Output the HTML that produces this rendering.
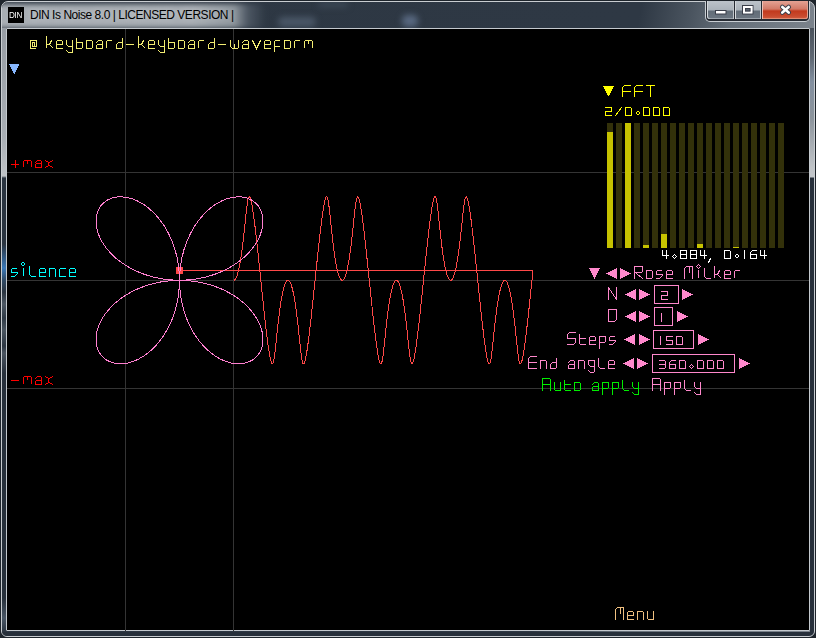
<!DOCTYPE html>
<html><head><meta charset="utf-8">
<style>
html,body{margin:0;padding:0;width:816px;height:638px;overflow:hidden;background:#1e252c;}
.win{position:absolute;left:0;top:0;width:816px;height:638px;}
.frame{position:absolute;left:1px;top:1px;width:812px;height:634px;border:1px solid #c9cdd1;border-radius:7px 7px 6px 6px;overflow:hidden;background:linear-gradient(100deg,#2d3743 0px,#2e3844 630px,#4a545f 680px,#66707a 720px,#7a828b 800px);}
.glow{position:absolute;left:-8px;top:2px;width:272px;height:24px;background:linear-gradient(90deg,#a8aeb4 0px,#a6acb2 200px,#8e969d 240px,#4c5662 254px,rgba(46,56,68,0) 272px);filter:blur(2.5px);border-radius:6px;}
.glow2{position:absolute;left:-10px;top:-2px;width:30px;height:200px;background:#9ea4aa;}
.lside{position:absolute;left:0px;top:26px;width:4px;height:604px;background:linear-gradient(180deg,#979da4 0px,#a9afb5 110px,#bfc3c7 148px,#2a3440 150px,#2a3440 216px,#3a78b8 240px,#2f4a66 252px,#2a3440 264px,#4d5864 276px,#2f3a46 290px,#4a5560 302px,#2c3642 318px,#4a5460 325px,#27303b 345px,#27303b 570px,#4a5766 590px,#2c3642 604px);}
.rside{position:absolute;left:808px;top:26px;width:4px;height:604px;background:linear-gradient(180deg,#4a525c 0px,#5f6873 30px,#8390a0 54px,#8c949c 90px,#c0c4c8 140px,#c4c8cc 149px,#27303b 150px,#27303b 604px);}
.bside{position:absolute;left:0px;top:630px;width:812px;height:4px;background:#27303b;}
.content{position:absolute;left:6px;top:28px;width:802px;height:601px;border:1px solid #c4c9ce;background:#000;border-radius:1px;}
#app{position:absolute;left:0;top:0;}
.blob{position:absolute;filter:blur(3px);border-radius:5px;}
.bo{position:absolute;left:705px;top:1px;width:105px;height:21px;background:#c9ced3;border-radius:0 0 5px 5px;}
.bd{position:absolute;left:706px;top:1px;width:103px;height:20px;background:#262b33;border-radius:0 0 4px 4px;}
.bt{position:absolute;top:1px;height:18px;}
.bg{background:linear-gradient(180deg,#bcc3ca 0px,#aab2ba 9px,#626d78 10px,#6d7782 19px);box-shadow:inset 1px 0 0 #d5d9dd, inset -1px 0 0 #c0c5ca, inset 0 -1px 0 #9aa2aa;}
.bmin{left:707px;width:27px;border-radius:0 0 0 3px;}
.bmax{left:735px;width:26px;}
.bcls{left:762px;width:46px;border-radius:0 0 3px 0;background:linear-gradient(180deg,#e4a294 0px,#d27a68 8px,#c23a1e 10px,#c84a2e 15px,#d6664a 19px);box-shadow:inset 1px 0 0 #efc0b4, inset -1px 0 0 #e0a090, inset 0 -1px 0 #e08a70;}

.icon{position:absolute;left:8px;top:7px;width:16px;height:16px;background:#000;}
.icon span{position:absolute;left:1px;top:3px;font:9px/10px "Liberation Sans",sans-serif;color:#fff;letter-spacing:-0.4px;transform:scaleX(0.9);transform-origin:0 0;}
.title{position:absolute;left:30px;top:7px;font:12px/16px "Liberation Sans",sans-serif;color:#000;white-space:nowrap;letter-spacing:-0.47px;
 text-shadow:0 0 6px rgba(255,255,255,0.5);}
</style></head><body>
<div class="win">
 <div class="frame"><div class="glow"></div><div class="blob" style="left:276px;top:15px;width:38px;height:10px;background:#4a5767;"></div><div class="blob" style="left:400px;top:13px;width:16px;height:12px;background:#586880;"></div><div class="blob" style="left:316px;top:0px;width:30px;height:5px;background:#3e4a58;"></div><div class="lside"></div><div class="rside"></div><div class="bside"></div></div>
 <div class="icon"><span>DIN</span></div>
 <div class="title">DIN Is Noise 8.0 | LICENSED VERSION |</div>
 <div class="bo"></div><div class="bd"></div>
 <div class="bt bg bmin"></div>
 <div class="bt bg bmax"></div>
 <div class="bt bcls"></div>
 <svg width="816" height="24" style="position:absolute;left:0;top:0">
  <rect x="715.5" y="10.5" width="10.5" height="3.5" fill="#fff" stroke="#3a3f4a" stroke-width="1"/>
  <rect x="742.5" y="5.5" width="10.5" height="8.5" fill="none" stroke="#3a3f4a" stroke-width="1"/>
  <rect x="744" y="7" width="7.5" height="5.5" fill="none" stroke="#fff" stroke-width="2"/>
  <rect x="745.5" y="8.5" width="4.5" height="2.5" fill="#5a6470" stroke="#3a3f4a" stroke-width="1"/>
  <path d="M782.3 7 L788.7 12.6 M788.7 7 L782.3 12.6" stroke="#3a3f4a" stroke-width="4.6" stroke-linecap="round"/>
  <path d="M782.3 7 L788.7 12.6 M788.7 7 L782.3 12.6" stroke="#fff" stroke-width="2.6" stroke-linecap="round"/>
 </svg>
 <div class="content"></div>
</div>
<svg id="app" width="816" height="638" viewBox="0 0 816 638"><g stroke="#343434" stroke-width="1" shape-rendering="crispEdges"><line x1="7" y1="172.5" x2="809" y2="172.5"/><line x1="7" y1="280.5" x2="809" y2="280.5"/><line x1="7" y1="388.5" x2="809" y2="388.5"/><line x1="125.5" y1="29" x2="125.5" y2="631"/><line x1="233.5" y1="29" x2="233.5" y2="631"/></g><path d="M233.72 280.30 L233.98 280.27 L234.23 280.19 L234.49 280.04 L234.75 279.84 L235.01 279.58 L235.26 279.27 L235.52 278.90 L235.77 278.47 L236.03 277.99 L236.28 277.45 L236.53 276.86 L236.79 276.21 L237.04 275.52 L237.28 274.78 L237.53 273.97 L237.78 273.13 L238.02 272.23 L238.27 271.29 L238.51 270.30 L238.75 269.27 L238.98 268.20 L239.22 267.08 L239.45 265.93 L239.68 264.73 L239.91 263.50 L240.14 262.24 L240.36 260.93 L240.58 259.60 L240.80 258.24 L241.02 256.85 L241.23 255.43 L241.44 253.99 L241.65 252.54 L241.86 251.05 L242.06 249.55 L242.26 248.03 L242.46 246.50 L242.65 244.95 L242.84 243.40 L243.03 241.84 L243.22 240.27 L243.40 238.70 L243.58 237.12 L243.75 235.56 L243.93 233.98 L244.10 232.42 L244.26 230.87 L244.43 229.32 L244.59 227.79 L244.75 226.27 L244.91 224.77 L245.06 223.29 L245.21 221.82 L245.36 220.38 L245.51 218.96 L245.65 217.57 L245.79 216.20 L245.93 214.88 L246.07 213.59 L246.21 212.32 L246.34 211.10 L246.48 209.90 L246.61 208.76 L246.74 207.65 L246.87 206.60 L247.00 205.59 L247.13 204.62 L247.26 203.70 L247.39 202.84 L247.52 202.02 L247.65 201.27 L247.78 200.56 L247.91 199.91 L248.04 199.32 L248.17 198.79 L248.31 198.32 L248.44 197.91 L248.58 197.56 L248.72 197.27 L248.86 197.05 L249.00 196.89 L249.15 196.80 L249.30 196.78 L249.45 196.82 L249.60 196.93 L249.76 197.10 L249.92 197.35 L250.08 197.66 L250.24 198.04 L250.41 198.49 L250.58 199.01 L250.75 199.59 L250.93 200.25 L251.10 200.97 L251.29 201.76 L251.47 202.62 L251.66 203.54 L251.85 204.53 L252.04 205.59 L252.24 206.71 L252.44 207.90 L252.64 209.15 L252.84 210.46 L253.05 211.84 L253.26 213.28 L253.47 214.77 L253.69 216.33 L253.91 217.94 L254.13 219.62 L254.35 221.33 L254.58 223.10 L254.81 224.94 L255.04 226.81 L255.27 228.75 L255.50 230.72 L255.74 232.73 L255.98 234.80 L256.22 236.90 L256.46 239.06 L256.70 241.23 L256.95 243.46 L257.20 245.70 L257.44 247.98 L257.70 250.31 L257.95 252.64 L258.20 255.02 L258.45 257.40 L258.71 259.82 L258.96 262.25 L259.22 264.69 L259.47 267.16 L259.73 269.63 L259.99 272.12 L260.24 274.61 L260.50 277.12 L260.76 279.61 L261.02 282.10 L261.28 284.61 L261.53 287.10 L261.79 289.60 L262.05 292.07 L262.30 294.54 L262.56 297.00 L262.82 299.44 L263.07 301.87 L263.33 304.26 L263.58 306.66 L263.83 309.00 L264.08 311.33 L264.33 313.64 L264.58 315.90 L264.82 318.15 L265.07 320.34 L265.31 322.52 L265.55 324.64 L265.79 326.72 L266.03 328.77 L266.27 330.77 L266.50 332.73 L266.73 334.63 L266.96 336.48 L267.19 338.29 L267.41 340.04 L267.63 341.75 L267.85 343.38 L268.07 344.98 L268.29 346.50 L268.50 347.97 L268.71 349.38 L268.91 350.73 L269.12 352.02 L269.32 353.24 L269.52 354.40 L269.71 355.49 L269.90 356.52 L270.09 357.48 L270.28 358.37 L270.46 359.21 L270.64 359.96 L270.82 360.66 L270.99 361.28 L271.16 361.83 L271.33 362.32 L271.50 362.74 L271.66 363.09 L271.82 363.37 L271.98 363.58 L272.13 363.73 L272.28 363.81 L272.43 363.82 L272.58 363.76 L272.72 363.64 L272.87 363.46 L273.01 363.21 L273.15 362.89 L273.28 362.52 L273.42 362.08 L273.55 361.58 L273.68 361.02 L273.82 360.41 L273.95 359.73 L274.08 359.00 L274.21 358.22 L274.34 357.38 L274.46 356.49 L274.59 355.56 L274.72 354.57 L274.85 353.54 L274.98 352.45 L275.11 351.33 L275.25 350.16 L275.38 348.96 L275.52 347.73 L275.65 346.44 L275.79 345.13 L275.93 343.78 L276.08 342.41 L276.22 341.01 L276.37 339.58 L276.52 338.13 L276.67 336.65 L276.83 335.17 L276.98 333.65 L277.14 332.13 L277.31 330.58 L277.47 329.04 L277.64 327.48 L277.81 325.91 L277.99 324.34 L278.17 322.77 L278.35 321.20 L278.53 319.63 L278.72 318.06 L278.91 316.51 L279.10 314.95 L279.29 313.42 L279.49 311.89 L279.69 310.38 L279.90 308.89 L280.11 307.41 L280.31 305.96 L280.53 304.53 L280.74 303.13 L280.96 301.74 L281.18 300.40 L281.40 299.08 L281.63 297.79 L281.86 296.55 L282.09 295.33 L282.32 294.15 L282.55 293.02 L282.79 291.91 L283.02 290.86 L283.27 289.85 L283.51 288.88 L283.75 287.96 L284.00 287.09 L284.24 286.26 L284.49 285.49 L284.74 284.76 L284.99 284.09 L285.24 283.47 L285.50 282.90 L285.75 282.39 L286.00 281.93 L286.26 281.53 L286.51 281.19 L286.77 280.89 L287.03 280.66 L287.29 280.49 L287.54 280.37 L287.80 280.31 L288.06 280.31 L288.32 280.36 L288.58 280.47 L288.83 280.64 L289.09 280.87 L289.35 281.15 L289.60 281.49 L289.86 281.89 L290.11 282.34 L290.37 282.85 L290.62 283.41 L290.87 284.02 L291.12 284.69 L291.37 285.41 L291.62 286.18 L291.87 287.00 L292.11 287.87 L292.36 288.79 L292.60 289.75 L292.84 290.76 L293.08 291.81 L293.31 292.91 L293.55 294.04 L293.78 295.21 L294.01 296.42 L294.24 297.67 L294.46 298.96 L294.69 300.27 L294.91 301.62 L295.12 302.99 L295.34 304.39 L295.55 305.82 L295.76 307.27 L295.97 308.74 L296.17 310.23 L296.38 311.75 L296.57 313.27 L296.77 314.80 L296.96 316.35 L297.15 317.91 L297.34 319.48 L297.52 321.04 L297.70 322.62 L297.88 324.19 L298.06 325.75 L298.23 327.33 L298.40 328.88 L298.56 330.44 L298.73 331.97 L298.89 333.50 L299.05 335.02 L299.20 336.51 L299.35 337.99 L299.50 339.44 L299.65 340.88 L299.80 342.28 L299.94 343.65 L300.08 345.00 L300.22 346.31 L300.36 347.60 L300.49 348.84 L300.63 350.05 L300.76 351.22 L300.89 352.34 L301.02 353.43 L301.15 354.47 L301.28 355.46 L301.41 356.40 L301.54 357.29 L301.67 358.14 L301.80 358.93 L301.93 359.66 L302.06 360.34 L302.19 360.97 L302.32 361.53 L302.46 362.03 L302.59 362.48 L302.73 362.86 L302.87 363.18 L303.01 363.44 L303.15 363.63 L303.29 363.76 L303.44 363.82 L303.59 363.81 L303.74 363.74 L303.90 363.60 L304.05 363.39 L304.21 363.12 L304.38 362.78 L304.54 362.37 L304.71 361.88 L304.88 361.34 L305.05 360.72 L305.23 360.03 L305.41 359.28 L305.59 358.46 L305.78 357.57 L305.97 356.61 L306.16 355.60 L306.35 354.50 L306.55 353.36 L306.75 352.14 L306.96 350.86 L307.16 349.52 L307.37 348.11 L307.58 346.65 L307.80 345.12 L308.01 343.55 L308.23 341.91 L308.45 340.21 L308.68 338.47 L308.91 336.66 L309.13 334.82 L309.37 332.91 L309.60 330.96 L309.83 328.97 L310.07 326.93 L310.31 324.85 L310.55 322.72 L310.80 320.56 L311.04 318.37 L311.29 316.13 L311.53 313.87 L311.78 311.56 L312.03 309.24 L312.29 306.87 L312.54 304.50 L312.79 302.11 L313.05 299.68 L313.30 297.25 L313.56 294.78 L313.81 292.32 L314.07 289.83 L314.33 287.35 L314.59 284.86 L314.84 282.35 L315.10 279.86 L315.36 277.35 L315.62 274.86 L315.87 272.37 L316.13 269.88 L316.39 267.41 L316.65 264.93 L316.90 262.49 L317.16 260.05 L317.41 257.64 L317.66 255.26 L317.92 252.88 L318.17 250.54 L318.42 248.21 L318.67 245.93 L318.91 243.66 L319.16 241.45 L319.40 239.27 L319.65 237.11 L319.89 235.01 L320.13 232.93 L320.36 230.92 L320.60 228.93 L320.83 227.00 L321.06 225.13 L321.29 223.28 L321.51 221.51 L321.74 219.77 L321.96 218.10 L322.18 216.49 L322.39 214.92 L322.61 213.42 L322.82 211.98 L323.02 210.60 L323.23 209.27 L323.43 208.02 L323.63 206.83 L323.83 205.70 L324.02 204.64 L324.21 203.63 L324.40 202.70 L324.59 201.84 L324.77 201.04 L324.94 200.32 L325.12 199.65 L325.29 199.06 L325.46 198.53 L325.63 198.08 L325.79 197.69 L325.96 197.37 L326.11 197.12 L326.27 196.94 L326.42 196.83 L326.58 196.78 L326.72 196.80 L326.87 196.88 L327.01 197.03 L327.15 197.25 L327.29 197.53 L327.43 197.87 L327.57 198.28 L327.70 198.74 L327.84 199.26 L327.97 199.85 L328.10 200.49 L328.23 201.19 L328.36 201.95 L328.49 202.76 L328.62 203.62 L328.75 204.53 L328.88 205.49 L329.01 206.50 L329.14 207.56 L329.27 208.65 L329.40 209.79 L329.53 210.98 L329.67 212.19 L329.80 213.46 L329.94 214.75 L330.08 216.08 L330.22 217.43 L330.37 218.82 L330.51 220.24 L330.66 221.67 L330.81 223.14 L330.97 224.62 L331.12 226.13 L331.28 227.64 L331.44 229.17 L331.61 230.72 L331.77 232.27 L331.94 233.84 L332.12 235.40 L332.29 236.97 L332.47 238.55 L332.65 240.11 L332.84 241.69 L333.03 243.24 L333.22 244.80 L333.41 246.34 L333.61 247.87 L333.81 249.40 L334.01 250.90 L334.22 252.39 L334.42 253.85 L334.64 255.30 L334.85 256.71 L335.06 258.10 L335.28 259.47 L335.50 260.80 L335.73 262.11 L335.95 263.38 L336.18 264.62 L336.41 265.81 L336.65 266.97 L336.88 268.09 L337.12 269.17 L337.36 270.21 L337.60 271.20 L337.84 272.14 L338.09 273.04 L338.33 273.89 L338.58 274.70 L338.83 275.45 L339.08 276.15 L339.33 276.80 L339.58 277.39 L339.83 277.94 L340.09 278.42 L340.34 278.86 L340.60 279.23 L340.86 279.55 L341.11 279.82 L341.37 280.02 L341.63 280.17 L341.89 280.27 L342.14 280.30 L342.40 280.28 L342.66 280.20 L342.92 280.06 L343.17 279.86 L343.43 279.61 L343.69 279.30 L343.95 278.93 L344.20 278.51 L344.45 278.04 L344.71 277.50 L344.96 276.92 L345.21 276.28 L345.46 275.59 L345.71 274.84 L345.96 274.05 L346.20 273.21 L346.45 272.32 L346.69 271.38 L346.93 270.39 L347.17 269.37 L347.41 268.29 L347.64 267.19 L347.88 266.04 L348.11 264.84 L348.34 263.62 L348.57 262.35 L348.79 261.05 L349.01 259.73 L349.23 258.36 L349.45 256.98 L349.66 255.56 L349.87 254.13 L350.08 252.66 L350.29 251.18 L350.49 249.69 L350.69 248.17 L350.89 246.64 L351.08 245.09 L351.27 243.54 L351.46 241.97 L351.65 240.41 L351.83 238.85 L352.01 237.27 L352.19 235.70 L352.36 234.13 L352.53 232.57 L352.70 231.02 L352.86 229.46 L353.02 227.93 L353.18 226.41 L353.34 224.91 L353.50 223.41 L353.65 221.95 L353.79 220.51 L353.94 219.09 L354.09 217.70 L354.23 216.33 L354.37 215.00 L354.51 213.69 L354.64 212.43 L354.78 211.21 L354.91 210.01 L355.04 208.87 L355.18 207.75 L355.31 206.69 L355.44 205.67 L355.57 204.71 L355.69 203.79 L355.82 202.91 L355.95 202.10 L356.08 201.33 L356.21 200.62 L356.34 199.97 L356.47 199.37 L356.61 198.84 L356.74 198.36 L356.88 197.94 L357.02 197.59 L357.15 197.30 L357.30 197.07 L357.44 196.91 L357.58 196.81 L357.73 196.78 L357.88 196.81 L358.04 196.91 L358.19 197.08 L358.35 197.32 L358.51 197.63 L358.67 198.00 L358.84 198.45 L359.01 198.96 L359.18 199.53 L359.36 200.18 L359.53 200.90 L359.72 201.69 L359.90 202.53 L360.09 203.46 L360.28 204.44 L360.47 205.49 L360.67 206.61 L360.87 207.79 L361.07 209.04 L361.27 210.34 L361.48 211.72 L361.69 213.14 L361.90 214.63 L362.12 216.19 L362.34 217.79 L362.56 219.46 L362.78 221.17 L363.01 222.95 L363.23 224.77 L363.46 226.64 L363.70 228.57 L363.93 230.53 L364.17 232.56 L364.40 234.61 L364.64 236.71 L364.89 238.86 L365.13 241.03 L365.38 243.25 L365.62 245.50 L365.87 247.79 L366.12 250.09 L366.37 252.42 L366.62 254.80 L366.88 257.18 L367.13 259.60 L367.39 262.02 L367.64 264.48 L367.90 266.93 L368.15 269.40 L368.41 271.90 L368.67 274.38 L368.93 276.89 L369.19 279.38 L369.44 281.87 L369.70 284.38 L369.96 286.87 L370.22 289.37 L370.47 291.85 L370.73 294.33 L370.99 296.78 L371.24 299.21 L371.50 301.65 L371.75 304.04 L372.00 306.44 L372.25 308.79 L372.51 311.13 L372.75 313.43 L373.00 315.69 L373.25 317.94 L373.49 320.14 L373.74 322.32 L373.98 324.45 L374.22 326.55 L374.46 328.59 L374.69 330.58 L374.93 332.55 L375.16 334.46 L375.39 336.32 L375.61 338.13 L375.84 339.88 L376.06 341.59 L376.28 343.24 L376.50 344.84 L376.71 346.36 L376.93 347.85 L377.14 349.26 L377.34 350.61 L377.55 351.90 L377.75 353.13 L377.95 354.30 L378.14 355.39 L378.33 356.43 L378.52 357.40 L378.71 358.29 L378.89 359.13 L379.07 359.90 L379.25 360.60 L379.42 361.22 L379.59 361.78 L379.76 362.28 L379.93 362.70 L380.09 363.06 L380.25 363.35 L380.41 363.57 L380.57 363.72 L380.72 363.80 L380.87 363.82 L381.01 363.77 L381.16 363.66 L381.30 363.48 L381.44 363.23 L381.58 362.93 L381.72 362.56 L381.85 362.12 L381.99 361.63 L382.12 361.07 L382.25 360.47 L382.38 359.79 L382.51 359.07 L382.64 358.29 L382.77 357.46 L382.90 356.58 L383.03 355.64 L383.16 354.66 L383.29 353.63 L383.42 352.55 L383.55 351.44 L383.68 350.27 L383.82 349.08 L383.95 347.83 L384.09 346.56 L384.23 345.26 L384.37 343.91 L384.51 342.54 L384.66 341.14 L384.80 339.71 L384.95 338.26 L385.11 336.79 L385.26 335.30 L385.42 333.79 L385.58 332.27 L385.74 330.72 L385.91 329.18 L386.08 327.61 L386.25 326.05 L386.42 324.49 L386.60 322.91 L386.78 321.34 L386.96 319.77 L387.15 318.21 L387.34 316.65 L387.53 315.09 L387.72 313.56 L387.92 312.03 L388.12 310.52 L388.33 309.02 L388.53 307.55 L388.74 306.10 L388.96 304.66 L389.17 303.25 L389.39 301.87 L389.61 300.52 L389.83 299.19 L390.06 297.91 L390.28 296.66 L390.51 295.44 L390.74 294.26 L390.98 293.11 L391.21 292.01 L391.45 290.96 L391.69 289.94 L391.93 288.97 L392.18 288.04 L392.42 287.16 L392.67 286.33 L392.92 285.55 L393.16 284.83 L393.42 284.15 L393.67 283.52 L393.92 282.95 L394.17 282.44 L394.43 281.97 L394.68 281.56 L394.94 281.21 L395.20 280.92 L395.45 280.68 L395.71 280.50 L395.97 280.38 L396.23 280.31 L396.49 280.30 L396.74 280.35 L397.00 280.46 L397.26 280.62 L397.52 280.85 L397.77 281.13 L398.03 281.46 L398.28 281.85 L398.54 282.30 L398.79 282.80 L399.05 283.36 L399.30 283.97 L399.55 284.63 L399.80 285.34 L400.05 286.11 L400.29 286.92 L400.54 287.79 L400.78 288.70 L401.03 289.66 L401.27 290.67 L401.50 291.71 L401.74 292.80 L401.97 293.93 L402.21 295.11 L402.44 296.31 L402.66 297.55 L402.89 298.84 L403.11 300.14 L403.33 301.49 L403.55 302.86 L403.77 304.27 L403.98 305.69 L404.19 307.13 L404.40 308.61 L404.60 310.09 L404.80 311.61 L405.00 313.13 L405.20 314.67 L405.39 316.21 L405.58 317.76 L405.77 319.33 L405.95 320.90 L406.14 322.48 L406.31 324.04 L406.49 325.62 L406.66 327.18 L406.83 328.74 L407.00 330.30 L407.16 331.83 L407.32 333.37 L407.48 334.88 L407.63 336.37 L407.79 337.85 L407.94 339.31 L408.09 340.74 L408.23 342.15 L408.38 343.53 L408.52 344.88 L408.66 346.19 L408.79 347.48 L408.93 348.73 L409.06 349.94 L409.20 351.11 L409.33 352.25 L409.46 353.33 L409.59 354.37 L409.72 355.37 L409.85 356.32 L409.98 357.22 L410.11 358.06 L410.23 358.86 L410.37 359.60 L410.50 360.28 L410.63 360.91 L410.76 361.48 L410.89 361.99 L411.03 362.44 L411.16 362.83 L411.30 363.15 L411.44 363.42 L411.59 363.61 L411.73 363.75 L411.88 363.81 L412.02 363.82 L412.18 363.75 L412.33 363.62 L412.49 363.42 L412.65 363.15 L412.81 362.81 L412.97 362.40 L413.14 361.93 L413.31 361.39 L413.49 360.78 L413.66 360.10 L413.84 359.35 L414.02 358.54 L414.21 357.66 L414.40 356.71 L414.59 355.69 L414.78 354.61 L414.98 353.46 L415.18 352.25 L415.38 350.98 L415.59 349.65 L415.80 348.24 L416.01 346.79 L416.22 345.26 L416.44 343.69 L416.66 342.05 L416.88 340.37 L417.11 338.63 L417.33 336.83 L417.56 334.99 L417.79 333.08 L418.03 331.14 L418.26 329.16 L418.50 327.12 L418.74 325.04 L418.98 322.91 L419.22 320.76 L419.47 318.56 L419.71 316.33 L419.96 314.08 L420.21 311.77 L420.46 309.45 L420.71 307.09 L420.96 304.72 L421.22 302.31 L421.47 299.90 L421.73 297.47 L421.98 295.01 L422.24 292.55 L422.50 290.06 L422.75 287.58 L423.01 285.07 L423.27 282.58 L423.53 280.09 L423.78 277.58 L424.04 275.09 L424.30 272.58 L424.56 270.10 L424.81 267.63 L425.07 265.16 L425.33 262.72 L425.58 260.27 L425.84 257.86 L426.09 255.46 L426.34 253.09 L426.59 250.75 L426.84 248.42 L427.09 246.14 L427.34 243.87 L427.58 241.65 L427.83 239.45 L428.07 237.31 L428.31 235.20 L428.55 233.12 L428.79 231.10 L429.02 229.11 L429.26 227.18 L429.49 225.30 L429.72 223.45 L429.94 221.67 L430.17 219.93 L430.39 218.25 L430.61 216.62 L430.82 215.06 L431.03 213.56 L431.25 212.11 L431.45 210.72 L431.66 209.39 L431.86 208.13 L432.06 206.93 L432.26 205.80 L432.45 204.73 L432.64 203.72 L432.83 202.79 L433.02 201.91 L433.20 201.11 L433.38 200.37 L433.55 199.71 L433.73 199.11 L433.90 198.58 L434.06 198.12 L434.23 197.72 L434.39 197.40 L434.55 197.14 L434.71 196.95 L434.86 196.83 L435.01 196.78 L435.16 196.79 L435.30 196.87 L435.45 197.02 L435.59 197.22 L435.73 197.50 L435.87 197.83 L436.00 198.24 L436.14 198.69 L436.27 199.22 L436.40 199.79 L436.53 200.43 L436.67 201.13 L436.80 201.87 L436.92 202.68 L437.05 203.53 L437.18 204.44 L437.31 205.40 L437.44 206.40 L437.57 207.46 L437.70 208.55 L437.84 209.69 L437.97 210.87 L438.10 212.08 L438.24 213.34 L438.38 214.63 L438.52 215.96 L438.66 217.31 L438.80 218.70 L438.95 220.11 L439.10 221.54 L439.25 223.01 L439.40 224.48 L439.56 225.99 L439.71 227.50 L439.88 229.04 L440.04 230.58 L440.21 232.13 L440.38 233.69 L440.55 235.26 L440.73 236.83 L440.90 238.40 L441.09 239.97 L441.27 241.54 L441.46 243.10 L441.65 244.66 L441.84 246.20 L442.04 247.74 L442.24 249.26 L442.44 250.76 L442.65 252.25 L442.85 253.72 L443.06 255.17 L443.28 256.58 L443.49 257.98 L443.71 259.35 L443.93 260.68 L444.16 261.99 L444.38 263.26 L444.61 264.50 L444.84 265.70 L445.07 266.86 L445.31 267.99 L445.54 269.07 L445.78 270.12 L446.02 271.11 L446.27 272.06 L446.51 272.96 L446.76 273.82 L447.00 274.63 L447.25 275.38 L447.50 276.09 L447.75 276.74 L448.01 277.34 L448.26 277.89 L448.51 278.38 L448.77 278.82 L449.02 279.20 L449.28 279.53 L449.54 279.80 L449.80 280.01 L450.05 280.16 L450.31 280.26 L450.57 280.30 L450.83 280.28 L451.08 280.20 L451.34 280.07 L451.60 279.88 L451.86 279.63 L452.11 279.33 L452.37 278.97 L452.62 278.55 L452.88 278.08 L453.13 277.55 L453.38 276.97 L453.64 276.34 L453.89 275.65 L454.14 274.91 L454.38 274.13 L454.63 273.28 L454.87 272.40 L455.12 271.47 L455.36 270.49 L455.60 269.47 L455.84 268.39 L456.07 267.29 L456.30 266.14 L456.54 264.95 L456.76 263.73 L456.99 262.46 L457.22 261.17 L457.44 259.84 L457.66 258.49 L457.87 257.11 L458.09 255.69 L458.30 254.26 L458.51 252.80 L458.72 251.32 L458.92 249.82 L459.12 248.31 L459.32 246.78 L459.51 245.23 L459.70 243.69 L459.89 242.12 L460.08 240.56 L460.26 238.98 L460.44 237.41 L460.62 235.85 L460.79 234.27 L460.96 232.71 L461.13 231.15 L461.30 229.60 L461.46 228.07 L461.62 226.54 L461.77 225.04 L461.93 223.55 L462.08 222.08 L462.23 220.63 L462.38 219.22 L462.52 217.82 L462.66 216.45 L462.80 215.12 L462.94 213.81 L463.08 212.55 L463.21 211.31 L463.35 210.12 L463.48 208.97 L463.61 207.85 L463.74 206.79 L463.87 205.76 L464.00 204.79 L464.13 203.86 L464.26 202.99 L464.39 202.17 L464.52 201.40 L464.65 200.68 L464.78 200.02 L464.91 199.42 L465.04 198.88 L465.18 198.40 L465.31 197.98 L465.45 197.62 L465.59 197.32 L465.73 197.09 L465.87 196.92 L466.02 196.81 L466.17 196.78 L466.32 196.81 L466.47 196.90 L466.62 197.07 L466.78 197.30 L466.94 197.60 L467.11 197.96 L467.27 198.40 L467.44 198.91 L467.61 199.48 L467.79 200.12 L467.97 200.83 L468.15 201.61 L468.33 202.45 L468.52 203.37 L468.71 204.35 L468.90 205.40 L469.10 206.50 L469.30 207.67 L469.50 208.92 L469.70 210.22 L469.91 211.59 L470.12 213.01 L470.33 214.50 L470.55 216.04 L470.76 217.64 L470.98 219.30 L471.21 221.01 L471.43 222.79 L471.66 224.60 L471.89 226.48 L472.12 228.39 L472.36 230.35 L472.59 232.37 L472.83 234.42 L473.07 236.53 L473.31 238.66 L473.56 240.83 L473.80 243.05 L474.05 245.29 L474.30 247.58 L474.55 249.88 L474.80 252.23 L475.05 254.58 L475.30 256.96 L475.56 259.38 L475.81 261.80 L476.07 264.26 L476.32 266.71 L476.58 269.19 L476.84 271.67 L477.09 274.15 L477.35 276.66 L477.61 279.15 L477.87 281.66 L478.13 284.15 L478.38 286.64 L478.64 289.14 L478.90 291.62 L479.16 294.10 L479.41 296.55 L479.67 299.01 L479.92 301.42 L480.17 303.82 L480.43 306.22 L480.68 308.57 L480.93 310.92 L481.18 313.22 L481.43 315.50 L481.67 317.74 L481.92 319.94 L482.16 322.12 L482.40 324.25 L482.65 326.36 L482.88 328.40 L483.12 330.42 L483.35 332.37 L483.58 334.28 L483.82 336.16 L484.04 337.96 L484.27 339.73 L484.49 341.44 L484.71 343.09 L484.93 344.69 L485.14 346.23 L485.36 347.71 L485.56 349.13 L485.77 350.49 L485.98 351.79 L486.18 353.02 L486.38 354.19 L486.57 355.30 L486.76 356.34 L486.95 357.31 L487.14 358.22 L487.32 359.06 L487.50 359.83 L487.68 360.54 L487.86 361.17 L488.03 361.74 L488.20 362.24 L488.36 362.67 L488.53 363.03 L488.69 363.32 L488.84 363.55 L489.00 363.71 L489.15 363.80 L489.30 363.82 L489.45 363.78 L489.59 363.67 L489.74 363.50 L489.88 363.26 L490.02 362.96 L490.15 362.59 L490.29 362.16 L490.42 361.68 L490.56 361.13 L490.69 360.52 L490.82 359.86 L490.95 359.14 L491.08 358.36 L491.21 357.54 L491.34 356.66 L491.47 355.73 L491.59 354.75 L491.73 353.72 L491.86 352.65 L491.99 351.54 L492.12 350.38 L492.25 349.19 L492.39 347.95 L492.53 346.68 L492.66 345.37 L492.80 344.03 L492.95 342.67 L493.09 341.27 L493.24 339.85 L493.39 338.39 L493.54 336.93 L493.69 335.43 L493.85 333.93 L494.01 332.41 L494.17 330.86 L494.34 329.32 L494.51 327.76 L494.68 326.20 L494.85 324.63 L495.03 323.05 L495.21 321.49 L495.39 319.91 L495.58 318.35 L495.77 316.78 L495.96 315.24 L496.15 313.70 L496.35 312.17 L496.55 310.66 L496.76 309.15 L496.96 307.68 L497.17 306.22 L497.38 304.79 L497.60 303.38 L497.82 301.99 L498.04 300.64 L498.26 299.32 L498.48 298.03 L498.71 296.76 L498.94 295.55 L499.17 294.37 L499.40 293.22 L499.64 292.11 L499.88 291.05 L500.12 290.03 L500.36 289.06 L500.60 288.12 L500.85 287.24 L501.09 286.41 L501.34 285.62 L501.59 284.89 L501.84 284.21 L502.09 283.58 L502.34 283.00 L502.60 282.48 L502.85 282.01 L503.11 281.60 L503.37 281.24 L503.62 280.94 L503.88 280.70 L504.14 280.51 L504.39 280.39 L504.65 280.32 L504.91 280.30 L505.17 280.35 L505.43 280.45 L505.68 280.61 L505.94 280.82 L506.20 281.10 L506.45 281.43 L506.71 281.81 L506.96 282.25 L507.22 282.75 L507.47 283.30 L507.72 283.91 L507.97 284.57 L508.23 285.28 L508.47 286.04 L508.72 286.85 L508.97 287.71 L509.21 288.62 L509.45 289.57 L509.69 290.57 L509.93 291.62 L510.17 292.70 L510.40 293.83 L510.63 295.00 L510.86 296.20 L511.09 297.45 L511.32 298.72 L511.54 300.02 L511.76 301.37 L511.98 302.73 L512.20 304.14 L512.41 305.56 L512.62 307.01 L512.83 308.47 L513.03 309.96 L513.23 311.47 L513.43 312.98 L513.63 314.53 L513.82 316.07 L514.01 317.63 L514.20 319.19 L514.38 320.75 L514.57 322.33 L514.75 323.90 L514.92 325.48 L515.09 327.04 L515.26 328.59 L515.43 330.15 L515.59 331.69 L515.76 333.23 L515.91 334.74 L516.07 336.24 L516.22 337.72 L516.37 339.17 L516.52 340.61 L516.67 342.02 L516.81 343.41 L516.95 344.76 L517.09 346.08 L517.23 347.37 L517.36 348.61 L517.50 349.83 L517.63 351.01 L517.76 352.15 L517.89 353.23 L518.03 354.29 L518.15 355.28 L518.28 356.23 L518.41 357.14 L518.54 357.99 L518.67 358.79 L518.80 359.53 L518.93 360.22 L519.06 360.86 L519.19 361.43 L519.33 361.95 L519.46 362.40 L519.60 362.80 L519.74 363.13 L519.88 363.39 L520.02 363.60 L520.16 363.74 L520.31 363.81 L520.46 363.82 L520.61 363.76 L520.76 363.63 L520.92 363.44 L521.08 363.17 L521.24 362.84 L521.41 362.44 L521.57 361.98 L521.74 361.44 L521.92 360.84 L522.09 360.17 L522.27 359.42 L522.46 358.62 L522.64 357.74 L522.83 356.80 L523.02 355.79 L523.21 354.71 L523.41 353.57 L523.61 352.36 L523.81 351.10 L524.02 349.76 L524.23 348.37 L524.44 346.93 L524.65 345.41 L524.87 343.84 L525.09 342.21 L525.31 340.53 L525.53 338.78 L525.76 337.00 L525.99 335.16 L526.22 333.26 L526.45 331.33 L526.69 329.33 L526.92 327.30 L527.16 325.24 L527.40 323.11 L527.65 320.96 L527.89 318.76 L528.14 316.54 L528.39 314.27 L528.63 311.98 L528.88 309.67 L529.14 307.31 L529.39 304.94 L529.64 302.53 L529.90 300.12 L530.15 297.68 L530.41 295.23 L530.66 292.77 L530.92 290.29 L531.18 287.81 L531.44 285.30 L531.69 282.81 L531.95 280.30" stroke="#ff4848" stroke-width="1" fill="none" shape-rendering="crispEdges"/><path d="M531.95 280.30 L532.60 278.50 L532.60 270.50 L179.50 270.50" stroke="#ff4848" stroke-width="1" fill="none" shape-rendering="crispEdges"/><rect x="176" y="267" width="7" height="7" fill="#ff4848"/><path d="M179.50 280.30 L188.57 279.92 L197.53 278.79 L206.27 276.92 L214.68 274.35 L222.67 271.12 L230.13 267.30 L236.98 262.95 L243.15 258.14 L248.56 252.96 L253.16 247.50 L256.91 241.87 L259.78 236.17 L261.75 230.49 L262.81 224.95 L262.98 219.65 L262.28 214.69 L260.75 210.16 L258.44 206.17 L255.40 202.80 L251.70 200.11 L247.44 198.18 L242.68 197.06 L237.54 196.79 L232.10 197.41 L226.48 198.93 L220.78 201.34 L215.10 204.66 L209.54 208.84 L204.21 213.85 L199.21 219.65 L194.61 226.16 L190.52 233.33 L186.98 241.07 L184.08 249.28 L181.86 257.87 L180.35 266.73 L179.60 275.76 L179.60 284.84 L180.35 293.87 L181.86 302.73 L184.08 311.32 L186.98 319.53 L190.52 327.27 L194.61 334.44 L199.21 340.95 L204.21 346.75 L209.54 351.76 L215.10 355.94 L220.78 359.26 L226.48 361.68 L232.10 363.19 L237.54 363.81 L242.68 363.54 L247.44 362.42 L251.70 360.49 L255.40 357.80 L258.44 354.43 L260.75 350.44 L262.28 345.91 L262.98 340.95 L262.81 335.65 L261.75 330.11 L259.78 324.43 L256.91 318.73 L253.16 313.10 L248.56 307.64 L243.15 302.46 L236.98 297.65 L230.13 293.30 L222.67 289.48 L214.68 286.25 L206.27 283.68 L197.53 281.81 L188.57 280.68 L179.50 280.30 L170.43 280.68 L161.47 281.81 L152.73 283.68 L144.32 286.25 L136.33 289.48 L128.87 293.30 L122.02 297.65 L115.85 302.46 L110.44 307.64 L105.84 313.10 L102.09 318.73 L99.22 324.43 L97.25 330.11 L96.19 335.65 L96.02 340.95 L96.72 345.91 L98.25 350.44 L100.56 354.43 L103.60 357.80 L107.30 360.49 L111.56 362.42 L116.32 363.54 L121.46 363.81 L126.90 363.19 L132.52 361.68 L138.22 359.26 L143.90 355.94 L149.46 351.76 L154.79 346.75 L159.79 340.95 L164.39 334.44 L168.48 327.27 L172.02 319.53 L174.92 311.32 L177.14 302.73 L178.65 293.87 L179.40 284.84 L179.40 275.76 L178.65 266.73 L177.14 257.87 L174.92 249.28 L172.02 241.07 L168.48 233.33 L164.39 226.16 L159.79 219.65 L154.79 213.85 L149.46 208.84 L143.90 204.66 L138.22 201.34 L132.52 198.93 L126.90 197.41 L121.46 196.79 L116.32 197.06 L111.56 198.18 L107.30 200.11 L103.60 202.80 L100.56 206.17 L98.25 210.16 L96.72 214.69 L96.02 219.65 L96.19 224.95 L97.25 230.49 L99.22 236.17 L102.09 241.87 L105.84 247.50 L110.44 252.96 L115.85 258.14 L122.02 262.95 L128.87 267.30 L136.33 271.12 L144.32 274.35 L152.73 276.92 L161.47 278.79 L170.43 279.92 L179.50 280.30" stroke="#ff80d0" stroke-width="1" fill="none" shape-rendering="crispEdges"/><g shape-rendering="crispEdges"><rect x="607" y="123" width="6" height="125" fill="#33310a"/><rect x="607" y="132" width="6" height="116" fill="#c6c200"/><rect x="616" y="123" width="6" height="125" fill="#33310a"/><rect x="625" y="123" width="6" height="125" fill="#33310a"/><rect x="625" y="123" width="6" height="125" fill="#c6c200"/><rect x="634" y="123" width="6" height="125" fill="#33310a"/><rect x="643" y="123" width="6" height="125" fill="#33310a"/><rect x="643" y="245" width="6" height="3" fill="#c6c200"/><rect x="652" y="123" width="6" height="125" fill="#33310a"/><rect x="661" y="123" width="6" height="125" fill="#33310a"/><rect x="661" y="234" width="6" height="14" fill="#c6c200"/><rect x="670" y="123" width="6" height="125" fill="#33310a"/><rect x="679" y="123" width="6" height="125" fill="#33310a"/><rect x="688" y="123" width="6" height="125" fill="#33310a"/><rect x="697" y="123" width="6" height="125" fill="#33310a"/><rect x="697" y="244" width="6" height="4" fill="#c6c200"/><rect x="706" y="123" width="6" height="125" fill="#33310a"/><rect x="715" y="123" width="6" height="125" fill="#33310a"/><rect x="724" y="123" width="6" height="125" fill="#33310a"/><rect x="733" y="123" width="6" height="125" fill="#33310a"/><rect x="733" y="247" width="6" height="1" fill="#c6c200"/><rect x="742" y="123" width="6" height="125" fill="#33310a"/><rect x="751" y="123" width="6" height="125" fill="#33310a"/><rect x="760" y="123" width="6" height="125" fill="#33310a"/><rect x="769" y="123" width="6" height="125" fill="#33310a"/><rect x="778" y="123" width="6" height="125" fill="#33310a"/></g><path d="M8.5 63.5 L19.5 63.5 L14 74.5 Z" fill="#88b8ff" shape-rendering="crispEdges"/><path d="M602.5 85.5 L614.5 85.5 L608.5 96.5 Z" fill="#ffff00" shape-rendering="crispEdges"/><path d="M588.5 267.5 L600.5 267.5 L594.5 279 Z" fill="#ff88cc" shape-rendering="crispEdges"/><path d="M606 273.5 L617 268 L617 279 Z" fill="#ff88cc" shape-rendering="crispEdges"/><path d="M620 268 L631 273.5 L620 279 Z" fill="#ff88cc" shape-rendering="crispEdges"/><path d="M625 294.5 L636 289 L636 300 Z" fill="#ff88cc" shape-rendering="crispEdges"/><path d="M639 289 L650 294.5 L639 300 Z" fill="#ff88cc" shape-rendering="crispEdges"/><rect x="654.5" y="285.5" width="24" height="18" stroke="#ff88cc" stroke-width="1" fill="none"/><path d="M682 289 L693 294.5 L682 300 Z" fill="#ff88cc" shape-rendering="crispEdges"/><path d="M625 316.5 L636 311 L636 322 Z" fill="#ff88cc" shape-rendering="crispEdges"/><path d="M639 311 L650 316.5 L639 322 Z" fill="#ff88cc" shape-rendering="crispEdges"/><rect x="654.5" y="307.5" width="18" height="18" stroke="#ff88cc" stroke-width="1" fill="none"/><path d="M676.5 311 L687.5 316.5 L676.5 322 Z" fill="#ff88cc" shape-rendering="crispEdges"/><path d="M624 339.5 L635 334 L635 345 Z" fill="#ff88cc" shape-rendering="crispEdges"/><path d="M638.5 334 L649.5 339.5 L638.5 345 Z" fill="#ff88cc" shape-rendering="crispEdges"/><rect x="653.5" y="330.5" width="40" height="18" stroke="#ff88cc" stroke-width="1" fill="none"/><path d="M697.5 334 L708.5 339.5 L697.5 345 Z" fill="#ff88cc" shape-rendering="crispEdges"/><path d="M623 363.5 L634 358 L634 369 Z" fill="#ff88cc" shape-rendering="crispEdges"/><path d="M637 358 L648 363.5 L637 369 Z" fill="#ff88cc" shape-rendering="crispEdges"/><rect x="652.5" y="354.5" width="82" height="18" stroke="#ff88cc" stroke-width="1" fill="none"/><path d="M738.5 358 L749.5 363.5 L738.5 369 Z" fill="#ff88cc" shape-rendering="crispEdges"/><path d="M35.5 48.5 L30.5 48.5 L30.5 40.5 L36.5 40.5 L36.5 46.5 L32.5 46.5 L32.5 42.5 L34.5 42.5 L34.5 46.5" stroke="#f3ed72" stroke-width="1" fill="none" stroke-linecap="square" stroke-linejoin="miter" shape-rendering="crispEdges"/><path d="M46.5 36.5 L46.5 47.5 M46.5 44.5 L49.5 44.5 L51.5 40.5 M49.5 44.5 L52.5 47.5 M62.5 44.5 L62.5 41.5 L61.5 40.5 L57.5 40.5 L56.5 41.5 L56.5 48.5 L62.5 48.5 M56.5 44.5 L62.5 44.5 M66.5 40.5 L66.5 44.5 L68.5 46.5 L72.5 46.5 M72.5 40.5 L72.5 52.5 L68.5 52.5 L66.5 50.5 M76.5 38.5 L76.5 48.5 L81.5 48.5 L82.5 47.5 L82.5 42.5 L76.5 42.5 M86.5 40.5 L91.5 40.5 L92.5 41.5 L92.5 47.5 L91.5 48.5 L86.5 48.5 L86.5 40.5 M96.5 42.5 L98.5 40.5 L101.5 40.5 L102.5 41.5 L102.5 48.5 L96.5 48.5 L96.5 45.5 L97.5 44.5 L102.5 44.5 M106.5 47.5 L106.5 41.5 L107.5 40.5 L111.5 40.5 M122.5 38.5 L122.5 47.5 L121.5 48.5 L116.5 48.5 L116.5 44.5 L118.5 42.5 L122.5 42.5 M126.5 44.5 L133.5 44.5 M138.5 36.5 L138.5 47.5 M138.5 44.5 L141.5 44.5 L143.5 40.5 M141.5 44.5 L144.5 47.5 M154.5 44.5 L154.5 41.5 L153.5 40.5 L149.5 40.5 L148.5 41.5 L148.5 48.5 L154.5 48.5 M148.5 44.5 L154.5 44.5 M158.5 40.5 L158.5 44.5 L160.5 46.5 L164.5 46.5 M164.5 40.5 L164.5 52.5 L160.5 52.5 L158.5 50.5 M168.5 38.5 L168.5 48.5 L173.5 48.5 L174.5 47.5 L174.5 42.5 L168.5 42.5 M178.5 40.5 L183.5 40.5 L184.5 41.5 L184.5 47.5 L183.5 48.5 L178.5 48.5 L178.5 40.5 M188.5 42.5 L190.5 40.5 L193.5 40.5 L194.5 41.5 L194.5 48.5 L188.5 48.5 L188.5 45.5 L189.5 44.5 L194.5 44.5 M198.5 47.5 L198.5 41.5 L199.5 40.5 L203.5 40.5 M214.5 38.5 L214.5 47.5 L213.5 48.5 L208.5 48.5 L208.5 44.5 L210.5 42.5 L214.5 42.5 M218.5 44.5 L225.5 44.5 M230.5 40.5 L230.5 46.5 L232.5 48.5 L237.5 48.5 L238.5 47.5 L238.5 40.5 M234.5 44.5 L234.5 48.5 M242.5 42.5 L244.5 40.5 L247.5 40.5 L248.5 41.5 L248.5 48.5 L242.5 48.5 L242.5 45.5 L243.5 44.5 L248.5 44.5 M252.5 40.5 L256.5 48.5 L260.5 40.5 M270.5 44.5 L270.5 41.5 L269.5 40.5 L265.5 40.5 L264.5 41.5 L264.5 48.5 L270.5 48.5 M264.5 44.5 L270.5 44.5 M279.5 40.5 L275.5 40.5 L274.5 41.5 L274.5 51.5 M274.5 46.5 L279.5 46.5 M284.5 40.5 L289.5 40.5 L290.5 41.5 L290.5 47.5 L289.5 48.5 L284.5 48.5 L284.5 40.5 M294.5 47.5 L294.5 41.5 L295.5 40.5 L299.5 40.5 M304.5 47.5 L304.5 41.5 L305.5 40.5 L311.5 40.5 L312.5 41.5 L312.5 47.5 M308.5 40.5 L308.5 43.5" stroke="#f3ed72" stroke-width="1" fill="none" stroke-linecap="square" stroke-linejoin="miter" shape-rendering="crispEdges"/><path d="M630.5 85.5 L624.5 85.5 L622.5 87.5 L622.5 96.5 M622.5 91.5 L630.5 91.5 M642.5 85.5 L636.5 85.5 L634.5 87.5 L634.5 96.5 M634.5 91.5 L642.5 91.5 M646.5 85.5 L654.5 85.5 M650.5 85.5 L650.5 96.5" stroke="#ffff00" stroke-width="1" fill="none" stroke-linecap="square" stroke-linejoin="miter" shape-rendering="crispEdges"/><path d="M605.5 107.5 L611.5 107.5 L611.5 111.5 L605.5 111.5 L605.5 115.5 L611.5 115.5 M615.5 115.5 L621.5 107.5 M625.5 115.5 L625.5 107.5 L630.5 107.5 L631.5 108.5 L631.5 115.5 L625.5 115.5 M643.5 115.5 L643.5 107.5 L648.5 107.5 L649.5 108.5 L649.5 115.5 L643.5 115.5 M653.5 115.5 L653.5 107.5 L658.5 107.5 L659.5 108.5 L659.5 115.5 L653.5 115.5 M663.5 115.5 L663.5 107.5 L668.5 107.5 L669.5 108.5 L669.5 115.5 L663.5 115.5" stroke="#ffff00" stroke-width="1" fill="none" stroke-linecap="square" stroke-linejoin="miter" shape-rendering="crispEdges"/><path d="M637.5 111.5 L638.5 111.5 L639.5 112.5 L639.5 113.5 L638.5 114.5 L637.5 114.5 L636.5 113.5 L636.5 112.5 Z" stroke="#ffff00" stroke-width="1" fill="none" shape-rendering="crispEdges"/><path d="M662.5 250.5 L662.5 255.5 L668.5 255.5 M666.5 250.5 L666.5 258.5 M680.5 250.5 L686.5 250.5 L686.5 258.5 L680.5 258.5 L680.5 250.5 M680.5 254.5 L686.5 254.5 M690.5 250.5 L696.5 250.5 L696.5 258.5 L690.5 258.5 L690.5 250.5 M690.5 254.5 L696.5 254.5 M700.5 250.5 L700.5 255.5 L706.5 255.5 M704.5 250.5 L704.5 258.5 M710.5 258.5 L708.5 262.5" stroke="#ffffff" stroke-width="1" fill="none" stroke-linecap="square" stroke-linejoin="miter" shape-rendering="crispEdges"/><path d="M672.5 256.5 L674.5 254.5 L676.5 256.5 L674.5 258.5 Z" stroke="#ffffff" stroke-width="1" fill="none" shape-rendering="crispEdges"/><path d="M724.5 258.5 L724.5 250.5 L729.5 250.5 L730.5 251.5 L730.5 258.5 L724.5 258.5 M744.5 250.5 L744.5 258.5 M756.5 250.5 L752.5 250.5 L750.5 252.5 L750.5 258.5 L756.5 258.5 L756.5 254.5 L750.5 254.5 M760.5 250.5 L760.5 255.5 L766.5 255.5 M764.5 250.5 L764.5 258.5" stroke="#ffffff" stroke-width="1" fill="none" stroke-linecap="square" stroke-linejoin="miter" shape-rendering="crispEdges"/><path d="M736.5 254.5 L737.5 254.5 L738.5 255.5 L738.5 256.5 L737.5 257.5 L736.5 257.5 L735.5 256.5 L735.5 255.5 Z" stroke="#ffffff" stroke-width="1" fill="none" shape-rendering="crispEdges"/><path d="M11.5 164.5 L18.5 164.5 M15.5 160.5 L15.5 167.5" stroke="#ff0000" stroke-width="1" fill="none" stroke-linecap="square" stroke-linejoin="miter" shape-rendering="crispEdges"/><path d="M23.5 166.5 L23.5 161.5 L24.5 160.5 L30.5 160.5 L31.5 161.5 L31.5 166.5 M27.5 160.5 L27.5 163.5 M35.5 162.5 L37.5 160.5 L40.5 160.5 L41.5 161.5 L41.5 167.5 L35.5 167.5 L35.5 164.5 L36.5 163.5 L41.5 163.5 M45.5 160.5 L48.5 162.5 L48.5 165.5 L45.5 167.5 M52.5 160.5 L49.5 162.5 M49.5 165.5 L52.5 167.5" stroke="#ff0000" stroke-width="1" fill="none" stroke-linecap="square" stroke-linejoin="miter" shape-rendering="crispEdges"/><path d="M16.5 268.5 L12.5 268.5 L11.5 269.5 L11.5 272.5 L17.5 272.5 L17.5 273.5 L14.5 276.5 L11.5 276.5 M23.5 268.5 L23.5 275.5 M29.5 266.5 L29.5 274.5 L31.5 276.5 L35.5 276.5 M45.5 272.5 L45.5 269.5 L44.5 268.5 L40.5 268.5 L39.5 269.5 L39.5 276.5 L45.5 276.5 M39.5 272.5 L45.5 272.5 M49.5 276.5 L49.5 268.5 L54.5 268.5 L55.5 269.5 L55.5 276.5 M65.5 268.5 L60.5 268.5 L59.5 269.5 L59.5 276.5 L65.5 276.5 M75.5 272.5 L75.5 269.5 L74.5 268.5 L70.5 268.5 L69.5 269.5 L69.5 276.5 L75.5 276.5 M69.5 272.5 L75.5 272.5" stroke="#00ffff" stroke-width="1" fill="none" stroke-linecap="square" stroke-linejoin="miter" shape-rendering="crispEdges"/><path d="M22.5 262.5 L23.5 262.5 L24.5 263.5 L24.5 264.5 L23.5 265.5 L22.5 265.5 L21.5 264.5 L21.5 263.5 Z" stroke="#00ffff" stroke-width="1" fill="none" shape-rendering="crispEdges"/><path d="M11.5 380.5 L18.5 380.5 M23.5 383.5 L23.5 377.5 L24.5 376.5 L30.5 376.5 L31.5 377.5 L31.5 383.5 M27.5 376.5 L27.5 379.5 M35.5 378.5 L37.5 376.5 L40.5 376.5 L41.5 377.5 L41.5 384.5 L35.5 384.5 L35.5 381.5 L36.5 380.5 L41.5 380.5 M45.5 376.5 L48.5 378.5 L48.5 382.5 L45.5 384.5 M52.5 376.5 L49.5 378.5 M49.5 382.5 L52.5 384.5" stroke="#ff0000" stroke-width="1" fill="none" stroke-linecap="square" stroke-linejoin="miter" shape-rendering="crispEdges"/><path d="M634.5 278.5 L634.5 266.5 L642.5 266.5 L642.5 271.5 L641.5 272.5 L634.5 272.5 M636.5 273.5 L642.5 278.5 M646.5 270.5 L651.5 270.5 L652.5 271.5 L652.5 277.5 L651.5 278.5 L646.5 278.5 L646.5 270.5 M661.5 270.5 L657.5 270.5 L656.5 271.5 L656.5 274.5 L662.5 274.5 L662.5 275.5 L659.5 278.5 L656.5 278.5 M672.5 274.5 L672.5 271.5 L671.5 270.5 L667.5 270.5 L666.5 271.5 L666.5 278.5 L672.5 278.5 M666.5 274.5 L672.5 274.5 M684.5 278.5 L684.5 268.5 L686.5 266.5 L692.5 266.5 L692.5 278.5 M689.5 266.5 L689.5 272.5 M698.5 270.5 L698.5 277.5 M704.5 268.5 L704.5 276.5 L706.5 278.5 L710.5 278.5 M714.5 266.5 L714.5 277.5 M714.5 274.5 L717.5 274.5 L719.5 270.5 M717.5 274.5 L720.5 277.5 M730.5 274.5 L730.5 271.5 L729.5 270.5 L725.5 270.5 L724.5 271.5 L724.5 278.5 L730.5 278.5 M724.5 274.5 L730.5 274.5 M734.5 277.5 L734.5 271.5 L735.5 270.5 L739.5 270.5" stroke="#ff88cc" stroke-width="1" fill="none" stroke-linecap="square" stroke-linejoin="miter" shape-rendering="crispEdges"/><path d="M696.5 266.5 L698.5 264.5 L700.5 266.5 L698.5 268.5 Z" stroke="#ff88cc" stroke-width="1" fill="none" shape-rendering="crispEdges"/><path d="M608.5 299.5 L608.5 287.5 L616.5 299.5 L616.5 287.5" stroke="#ff88cc" stroke-width="1" fill="none" stroke-linecap="square" stroke-linejoin="miter" shape-rendering="crispEdges"/><path d="M661.5 291.5 L667.5 291.5 L667.5 295.5 L661.5 295.5 L661.5 299.5 L667.5 299.5" stroke="#ff88cc" stroke-width="1" fill="none" stroke-linecap="square" stroke-linejoin="miter" shape-rendering="crispEdges"/><path d="M608.5 321.5 L608.5 309.5 L616.5 309.5 L616.5 319.5 L614.5 321.5 L608.5 321.5" stroke="#ff88cc" stroke-width="1" fill="none" stroke-linecap="square" stroke-linejoin="miter" shape-rendering="crispEdges"/><path d="M661.5 313.5 L661.5 321.5" stroke="#ff88cc" stroke-width="1" fill="none" stroke-linecap="square" stroke-linejoin="miter" shape-rendering="crispEdges"/><path d="M575.5 332.5 L569.5 332.5 L567.5 334.5 L567.5 338.5 L575.5 338.5 L575.5 342.5 L573.5 344.5 L567.5 344.5 M579.5 334.5 L579.5 343.5 L580.5 344.5 L585.5 344.5 M579.5 338.5 L585.5 338.5 M595.5 340.5 L595.5 337.5 L594.5 336.5 L590.5 336.5 L589.5 337.5 L589.5 344.5 L595.5 344.5 M589.5 340.5 L595.5 340.5 M599.5 348.5 L599.5 336.5 L605.5 336.5 L605.5 341.5 L604.5 342.5 L599.5 342.5 M614.5 336.5 L610.5 336.5 L609.5 337.5 L609.5 340.5 L615.5 340.5 L615.5 341.5 L612.5 344.5 L609.5 344.5" stroke="#ff88cc" stroke-width="1" fill="none" stroke-linecap="square" stroke-linejoin="miter" shape-rendering="crispEdges"/><path d="M660.5 336.5 L660.5 344.5 M672.5 336.5 L666.5 336.5 L666.5 340.5 L672.5 340.5 L672.5 344.5 L666.5 344.5 M676.5 344.5 L676.5 336.5 L681.5 336.5 L682.5 337.5 L682.5 344.5 L676.5 344.5" stroke="#ff88cc" stroke-width="1" fill="none" stroke-linecap="square" stroke-linejoin="miter" shape-rendering="crispEdges"/><path d="M536.5 356.5 L530.5 356.5 L528.5 358.5 L528.5 368.5 L536.5 368.5 M528.5 362.5 L536.5 362.5 M540.5 368.5 L540.5 360.5 L545.5 360.5 L546.5 361.5 L546.5 368.5 M556.5 358.5 L556.5 367.5 L555.5 368.5 L550.5 368.5 L550.5 364.5 L552.5 362.5 L556.5 362.5 M568.5 362.5 L570.5 360.5 L573.5 360.5 L574.5 361.5 L574.5 368.5 L568.5 368.5 L568.5 365.5 L569.5 364.5 L574.5 364.5 M578.5 368.5 L578.5 360.5 L583.5 360.5 L584.5 361.5 L584.5 368.5 M594.5 366.5 L590.5 366.5 L588.5 364.5 L588.5 360.5 L594.5 360.5 L594.5 371.5 L593.5 372.5 L590.5 372.5 L588.5 370.5 M598.5 358.5 L598.5 366.5 L600.5 368.5 L604.5 368.5 M614.5 364.5 L614.5 361.5 L613.5 360.5 L609.5 360.5 L608.5 361.5 L608.5 368.5 L614.5 368.5 M608.5 364.5 L614.5 364.5" stroke="#ff88cc" stroke-width="1" fill="none" stroke-linecap="square" stroke-linejoin="miter" shape-rendering="crispEdges"/><path d="M659.5 360.5 L664.5 360.5 L665.5 361.5 L665.5 367.5 L664.5 368.5 L659.5 368.5 M659.5 364.5 L665.5 364.5 M675.5 360.5 L671.5 360.5 L669.5 362.5 L669.5 368.5 L675.5 368.5 L675.5 364.5 L669.5 364.5 M679.5 368.5 L679.5 360.5 L684.5 360.5 L685.5 361.5 L685.5 368.5 L679.5 368.5 M697.5 368.5 L697.5 360.5 L702.5 360.5 L703.5 361.5 L703.5 368.5 L697.5 368.5 M707.5 368.5 L707.5 360.5 L712.5 360.5 L713.5 361.5 L713.5 368.5 L707.5 368.5 M717.5 368.5 L717.5 360.5 L722.5 360.5 L723.5 361.5 L723.5 368.5 L717.5 368.5" stroke="#ff88cc" stroke-width="1" fill="none" stroke-linecap="square" stroke-linejoin="miter" shape-rendering="crispEdges"/><path d="M689.5 366.5 L691.5 364.5 L693.5 366.5 L691.5 368.5 Z" stroke="#ff88cc" stroke-width="1" fill="none" shape-rendering="crispEdges"/><path d="M542.5 390.5 L542.5 378.5 L549.5 378.5 L550.5 379.5 L550.5 390.5 M542.5 384.5 L550.5 384.5 M554.5 382.5 L554.5 389.5 L555.5 390.5 L560.5 390.5 L560.5 382.5 M564.5 380.5 L564.5 389.5 L565.5 390.5 L570.5 390.5 M564.5 384.5 L570.5 384.5 M574.5 382.5 L579.5 382.5 L580.5 383.5 L580.5 389.5 L579.5 390.5 L574.5 390.5 L574.5 382.5 M592.5 384.5 L594.5 382.5 L597.5 382.5 L598.5 383.5 L598.5 390.5 L592.5 390.5 L592.5 387.5 L593.5 386.5 L598.5 386.5 M602.5 394.5 L602.5 382.5 L608.5 382.5 L608.5 387.5 L607.5 388.5 L602.5 388.5 M612.5 394.5 L612.5 382.5 L618.5 382.5 L618.5 387.5 L617.5 388.5 L612.5 388.5 M622.5 380.5 L622.5 388.5 L624.5 390.5 L628.5 390.5 M632.5 382.5 L632.5 386.5 L634.5 388.5 L638.5 388.5 M638.5 382.5 L638.5 394.5 L634.5 394.5 L632.5 392.5" stroke="#00ee00" stroke-width="1" fill="none" stroke-linecap="square" stroke-linejoin="miter" shape-rendering="crispEdges"/><path d="M652.5 390.5 L652.5 378.5 L659.5 378.5 L660.5 379.5 L660.5 390.5 M652.5 384.5 L660.5 384.5 M664.5 394.5 L664.5 382.5 L670.5 382.5 L670.5 387.5 L669.5 388.5 L664.5 388.5 M674.5 394.5 L674.5 382.5 L680.5 382.5 L680.5 387.5 L679.5 388.5 L674.5 388.5 M684.5 380.5 L684.5 388.5 L686.5 390.5 L690.5 390.5 M694.5 382.5 L694.5 386.5 L696.5 388.5 L700.5 388.5 M700.5 382.5 L700.5 394.5 L696.5 394.5 L694.5 392.5" stroke="#ff88cc" stroke-width="1" fill="none" stroke-linecap="square" stroke-linejoin="miter" shape-rendering="crispEdges"/><path d="M615.5 619.5 L615.5 609.5 L617.5 607.5 L623.5 607.5 L623.5 619.5 M620.5 607.5 L620.5 613.5 M633.5 615.5 L633.5 612.5 L632.5 611.5 L628.5 611.5 L627.5 612.5 L627.5 619.5 L633.5 619.5 M627.5 615.5 L633.5 615.5 M637.5 619.5 L637.5 611.5 L642.5 611.5 L643.5 612.5 L643.5 619.5 M647.5 611.5 L647.5 618.5 L648.5 619.5 L653.5 619.5 L653.5 611.5" stroke="#f0c080" stroke-width="1" fill="none" stroke-linecap="square" stroke-linejoin="miter" shape-rendering="crispEdges"/></svg>
</body></html>
